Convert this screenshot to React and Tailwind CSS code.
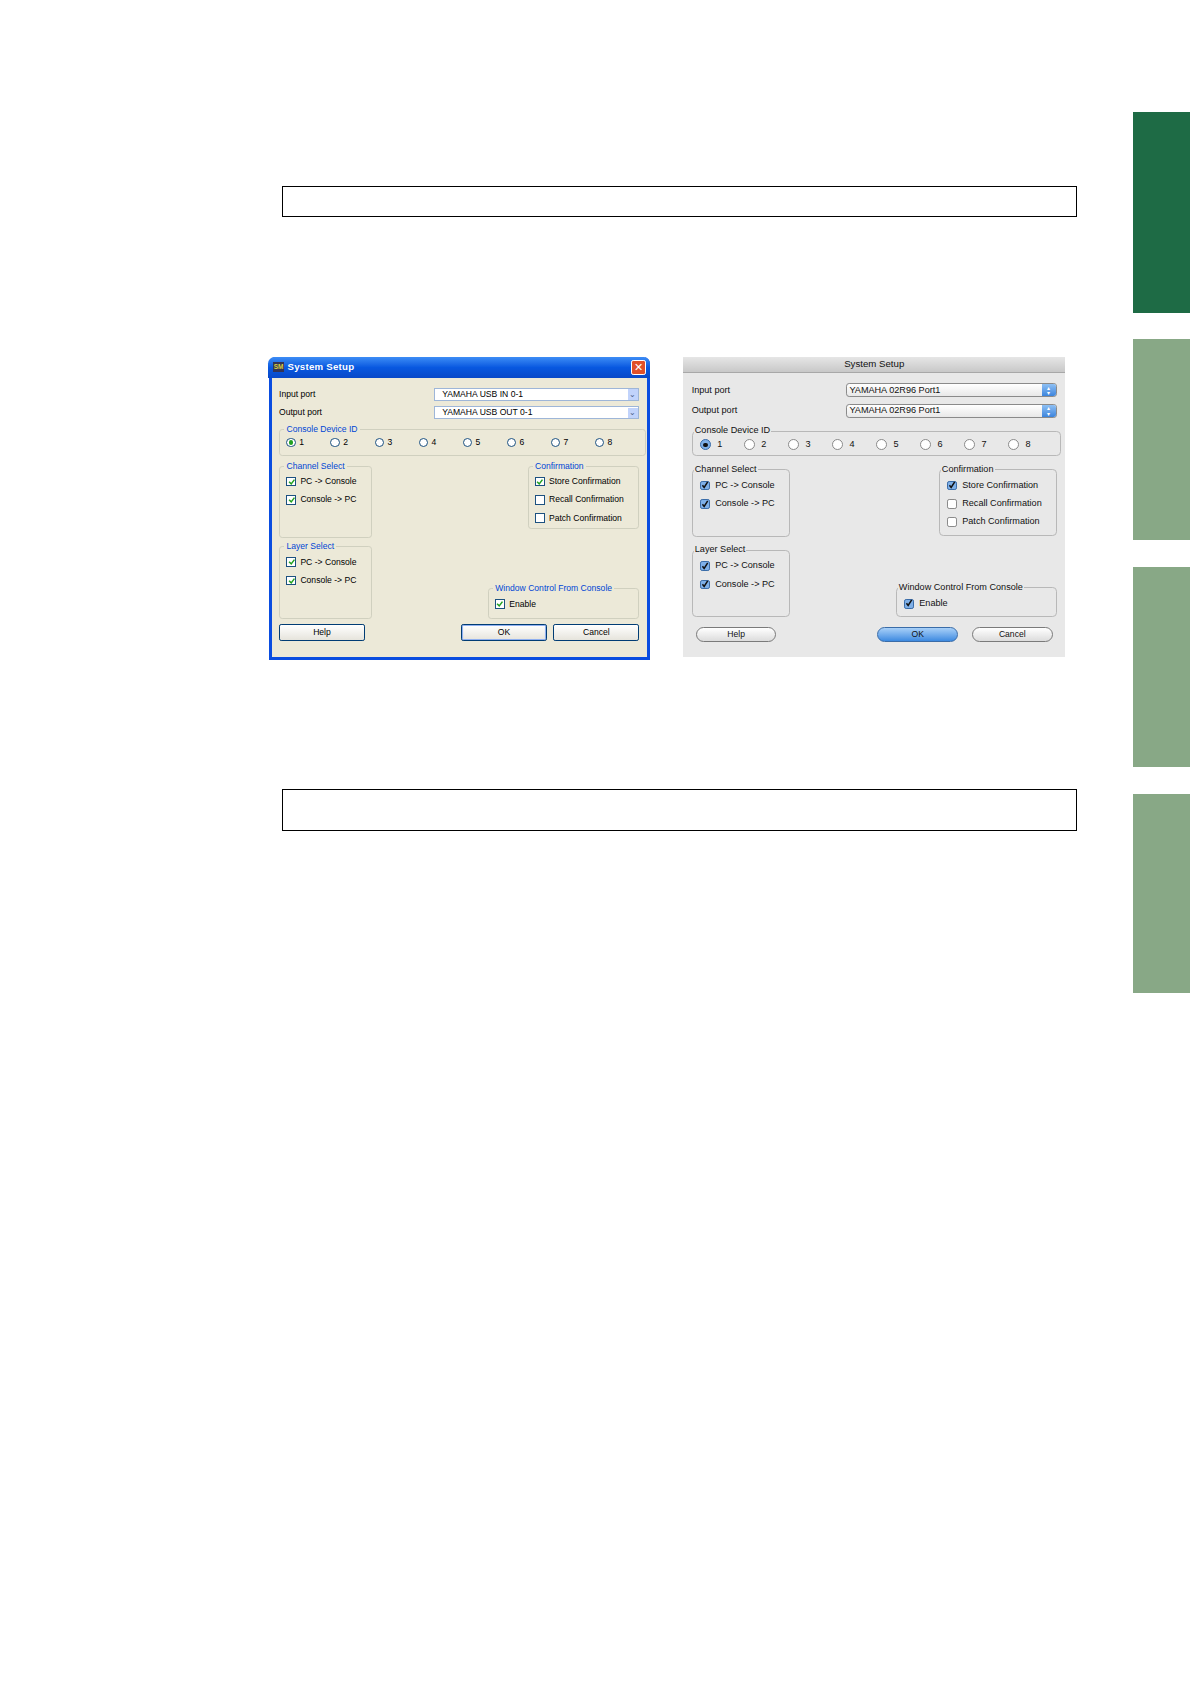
import React from 'react';

const xpFont = { fontFamily: '"Liberation Sans", Arial, sans-serif' };

function XpCheck({ checked, label }) {
  return (
    <div className="flex items-center gap-[4px] h-[17px]">
      <span className="w-[9px] h-[9px] border border-[#1c5180] bg-white flex items-center justify-center">
        {checked && (
          <svg width="7" height="7" viewBox="0 0 7 7"><path d="M1 3.5 L3 5.5 L6 1.5" stroke="#21a121" strokeWidth="1.4" fill="none" /></svg>
        )}
      </span>
      <span>{label}</span>
    </div>
  );
}

function XpGroup({ title, className, children }) {
  return (
    <fieldset className={`border border-[#d0d0bf] rounded-[3px] px-[6px] pb-[4px] ${className}`}>
      <legend className="px-[2px] text-[#0046d5] ml-[-2px]">{title}</legend>
      {children}
    </fieldset>
  );
}

function XpDialog() {
  const radios = ['1', '2', '3', '4', '5', '6', '7', '8'];
  return (
    <div className="w-[355px] h-[283px] border-[3px] border-[#0a4de0] border-t-0 rounded-t-[6px] bg-[#ece9d8] flex flex-col text-[8px] text-black" style={xpFont}>
      <div className="h-[20px] -mx-[3px] rounded-t-[6px] bg-gradient-to-b from-[#3c8cf5] via-[#0858e0] to-[#0848c8] flex items-center px-[4px] gap-[3px]">
        <span className="text-[6px] font-bold text-[#d8d040] bg-[#335] px-[1px]">SM</span>
        <span className="text-white font-bold text-[9px] tracking-wide">System Setup</span>
        <span className="ml-auto w-[14px] h-[14px] rounded-[2px] bg-[#e0502a] border border-white flex items-center justify-center text-white text-[10px] leading-none">✕</span>
      </div>
      <div className="flex-1 px-[7px] pt-[7px] flex flex-col">
        {[['Input port', 'YAMAHA USB IN 0-1'], ['Output port', 'YAMAHA USB OUT 0-1']].map(([l, v]) => (
          <div key={l} className="flex items-center h-[17px]">
            <span className="w-[144px]">{l}</span>
            <div className="flex-1 h-[12px] bg-white border border-[#9eb6d8] flex items-center pl-[7px]">
              <span className="flex-1">{v}</span>
              <span className="w-[10px] h-[10px] bg-[#c1d3fb] text-[#4d6185] text-[7px] flex items-center justify-center">⌄</span>
            </div>
          </div>
        ))}
        <XpGroup title="Console Device ID" className="mt-[1px] h-[31px]">
          <div className="flex">
            {radios.map((r, i) => (
              <div key={r} className="w-[41px] flex items-center gap-[3px]">
                <span className="w-[9px] h-[9px] rounded-full border border-[#1c5180] bg-white flex items-center justify-center">
                  {i === 0 && <span className="w-[4px] h-[4px] rounded-full bg-[#21a121]" />}
                </span>
                <span>{r}</span>
              </div>
            ))}
          </div>
        </XpGroup>
        <div className="flex justify-between mt-[3px]">
          <div className="flex flex-col gap-[2px]">
            <XpGroup title="Channel Select" className="w-[87px] h-[73px]">
              <XpCheck checked label="PC -> Console" />
              <XpCheck checked label="Console -> PC" />
            </XpGroup>
            <XpGroup title="Layer Select" className="w-[87px] h-[73px]">
              <XpCheck checked label="PC -> Console" />
              <XpCheck checked label="Console -> PC" />
            </XpGroup>
          </div>
          <div className="flex flex-col justify-between items-end">
            <XpGroup title="Confirmation" className="w-[104px] h-[65px]">
              <XpCheck checked label="Store Confirmation" />
              <XpCheck label="Recall Confirmation" />
              <XpCheck label="Patch Confirmation" />
            </XpGroup>
            <XpGroup title="Window Control From Console" className="w-[141px] h-[34px]">
              <XpCheck checked label="Enable" />
            </XpGroup>
          </div>
        </div>
        <div className="flex mt-[5px] gap-[6px]">
          <button className="w-[80px] h-[16px] border border-[#003c74] rounded-[2px] bg-gradient-to-b from-white to-[#e6e4dc] text-[8px]">Help</button>
          <div className="flex-1" />
          <button className="w-[80px] h-[16px] border border-[#003c74] rounded-[2px] bg-gradient-to-b from-white to-[#e6e4dc] text-[8px] shadow-[inset_0_0_0_1px_#90b0f0]">OK</button>
          <button className="w-[80px] h-[16px] border border-[#003c74] rounded-[2px] bg-gradient-to-b from-white to-[#e6e4dc] text-[8px]">Cancel</button>
        </div>
      </div>
    </div>
  );
}

function MacCheck({ checked, label }) {
  return (
    <div className="flex items-center gap-[5px] h-[17px]">
      <span className={`w-[9px] h-[9px] rounded-[2px] border ${checked ? 'border-[#3a6ca8] bg-[#7fb0e8]' : 'border-[#8a8a8a] bg-white'} flex items-center justify-center`}>
        {checked && (
          <svg width="8" height="8" viewBox="0 0 8 8"><path d="M1.5 4 L3.3 6.3 L7 0.5" stroke="#111" strokeWidth="1.6" fill="none" /></svg>
        )}
      </span>
      <span>{label}</span>
    </div>
  );
}

function MacGroup({ title, className, children }) {
  return (
    <fieldset className={`border border-[#b8b8b8] rounded-[4px] px-[7px] pb-[3px] ${className}`}>
      <legend className="px-[1px] ml-[-6px]">{title}</legend>
      {children}
    </fieldset>
  );
}

function MacDialog() {
  const radios = ['1', '2', '3', '4', '5', '6', '7', '8'];
  return (
    <div className="w-[356px] h-[280px] bg-[#e8e8e8] flex flex-col text-[8.5px] text-[#111]" style={xpFont}>
      <div className="h-[15px] bg-gradient-to-b from-[#e6e6e6] to-[#c8c8c8] border-b border-[#a8a8a8] flex items-center justify-center text-[9px]">System Setup</div>
      <div className="flex-1 px-[8px] pt-[7px] flex flex-col">
        {['Input port', 'Output port'].map((l) => (
          <div key={l} className="flex items-center h-[19px]">
            <span className="w-[144px]">{l}</span>
            <div className="flex-1 h-[13px] bg-gradient-to-b from-white to-[#e8e8e8] border border-[#8a8a8a] rounded-[3px] flex items-center pl-[2px]">
              <span className="flex-1">YAMAHA 02R96 Port1</span>
              <span className="w-[13px] h-full bg-gradient-to-b from-[#8ec0f4] to-[#3c84dc] rounded-r-[2px] text-white text-[6px] leading-[5px] flex flex-col items-center justify-center">▴<br />▾</span>
            </div>
          </div>
        ))}
        <MacGroup title="Console Device ID" className="mt-[3px] h-[30px]">
          <div className="flex">
            {radios.map((r, i) => (
              <div key={r} className="w-[41px] flex items-center gap-[6px]">
                <span className={`w-[10px] h-[10px] rounded-full border ${i === 0 ? 'border-[#3a6ca8] bg-[#7fb0e8]' : 'border-[#8a8a8a] bg-white'} flex items-center justify-center`}>
                  {i === 0 && <span className="w-[4px] h-[4px] rounded-full bg-[#111]" />}
                </span>
                <span>{r}</span>
              </div>
            ))}
          </div>
        </MacGroup>
        <div className="flex justify-between mt-[6px]">
          <div className="flex flex-col gap-[6px]">
            <MacGroup title="Channel Select" className="w-[92px] h-[69px]">
              <MacCheck checked label="PC -> Console" />
              <MacCheck checked label="Console -> PC" />
            </MacGroup>
            <MacGroup title="Layer Select" className="w-[92px] h-[69px]">
              <MacCheck checked label="PC -> Console" />
              <MacCheck checked label="Console -> PC" />
            </MacGroup>
          </div>
          <div className="flex flex-col justify-between items-end">
            <MacGroup title="Confirmation" className="w-[110px] h-[68px]">
              <MacCheck checked label="Store Confirmation" />
              <MacCheck label="Recall Confirmation" />
              <MacCheck label="Patch Confirmation" />
            </MacGroup>
            <MacGroup title="Window Control From Console" className="w-[150px] h-[34px]">
              <MacCheck checked label="Enable" />
            </MacGroup>
          </div>
        </div>
        <div className="flex mt-[9px] px-[4px] gap-[13px]">
          <button className="w-[75px] h-[14px] rounded-full border border-[#7a7a7a] bg-gradient-to-b from-white to-[#dcdcdc] text-[8px]">Help</button>
          <div className="flex-1" />
          <button className="w-[75px] h-[14px] rounded-full border border-[#3a6ca8] bg-gradient-to-b from-[#a8d0f8] to-[#3c8ae0] text-[8px]">OK</button>
          <button className="w-[75px] h-[14px] rounded-full border border-[#7a7a7a] bg-gradient-to-b from-white to-[#dcdcdc] text-[8px]">Cancel</button>
        </div>
      </div>
    </div>
  );
}

export default function App() {
  return (
    <div className="w-[1190px] h-[1684px] bg-white overflow-hidden">
      <div className="w-[1108px] h-[1568px] flex [zoom:1.074]">
        <div className="flex-1 flex flex-col pl-[250px] pt-[173px]">
          <div className="ml-[13px] w-[740px] h-[29px] border border-black" />
          <div className="flex gap-[31px] mt-[130px]">
            <XpDialog />
            <MacDialog />
          </div>
          <div className="ml-[13px] mt-[120px] w-[740px] h-[39px] border border-black" />
        </div>
        <div className="w-[53px] mr-0 pt-[104px] flex flex-col gap-[25px]">
          <div className="w-[53px] h-[187px] bg-[#1e6b45]" />
          <div className="w-[53px] h-[187px] bg-[#88a886]" />
          <div className="w-[53px] h-[186px] bg-[#88a886]" />
          <div className="w-[53px] h-[186px] bg-[#88a886]" />
        </div>
      </div>
    </div>
  );
}
